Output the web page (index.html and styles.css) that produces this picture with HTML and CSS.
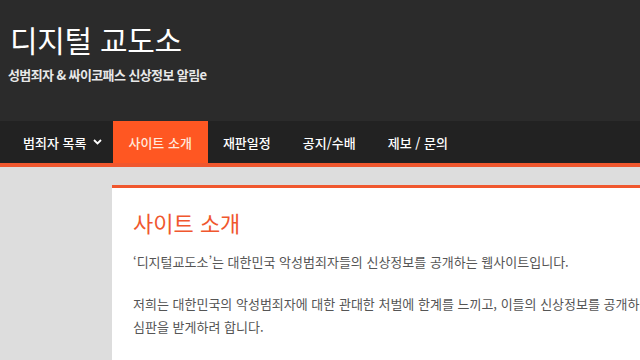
FILE: index.html
```html
<!DOCTYPE html>
<html lang="ko">
<head>
    <meta charset="UTF-8">
    <meta name="viewport" content="width=device-width, initial-scale=1.0">
    <title>디지털 교도소</title>
    <link rel="stylesheet" href="styles.css">
</head>
<body>
    <header class="site-header">
        <h1 class="site-title">디지털 교도소</h1>
        <p class="site-desc">성범죄자 &amp; 싸이코패스 신상정보 알림e</p>
    </header>

    <nav class="main-nav">
        <ul>
            <li class="has-sub"><a href="#">범죄자 목록
                <svg class="caret" width="9" height="6" viewBox="0 0 9 6"><path d="M1 1 L4.5 4.5 L8 1" fill="none" stroke="#fff" stroke-width="1.8"/></svg>
            </a></li>
            <li class="active"><a href="#">사이트 소개</a></li>
            <li><a href="#">재판일정</a></li>
            <li><a href="#">공지/수배</a></li>
            <li><a href="#">제보 / 문의</a></li>
        </ul>
    </nav>

    <main class="content">
        <article class="card">
            <h2>사이트 소개</h2>
            <p>‘디지털교도소’는 대한민국 악성범죄자들의 신상정보를 공개하는 웹사이트입니다.</p>
            <p>저희는 대한민국의 악성범죄자에 대한 관대한 처벌에 한계를 느끼고, 이들의 신상정보를 공개하여 사회적 심판을 받게하려 합니다.</p>
        </article>
    </main>
</body>
</html>
```

FILE: styles.css
```css
html, body {
    margin: 0;
    overflow: hidden;
}
body {
    font-family: "Noto Sans CJK KR", "Noto Sans", sans-serif;
    background-color: #dddddd;
    width: 1000px;
}
.site-header {
    background-color: #2b2b2b;
    height: 121px;
    padding: 0 10px;
    box-sizing: border-box;
    overflow: hidden;
}
.site-title {
    margin: 0;
    padding-top: 19px;
    font-size: 30px;
    font-weight: normal;
    line-height: 40px;
    color: #ffffff;
    letter-spacing: -0.3px;
}
.site-desc {
    margin: 6px 0 0 -2px;
    font-size: 13px;
    font-weight: bold;
    color: #e8e8e8;
    letter-spacing: -0.6px;
}
.main-nav {
    background-color: #222222;
    border-bottom: 4px solid #f0572e;
}
.main-nav ul {
    list-style: none;
    margin: 0;
    padding: 0 0 0 8px;
    display: flex;
}
.main-nav a {
    display: flex;
    align-items: center;
    gap: 7px;
    height: 42px;
    padding: 0 17px 0 15px;
    color: #ffffff;
    font-size: 13px;
    font-weight: 500;
    text-decoration: none;
}
.main-nav li.has-sub a {
    padding-right: 11px;
}
.main-nav li.active a {
    padding-right: 16px;
    background-color: #ff5722;
    color: #ffe9dc;
}
.content {
    padding: 18px 0 0 112px;
}
.card {
    background-color: #ffffff;
    border-top: 3px solid #f0572e;
    padding: 18px 21px 40px;
    width: 575px;
}
.card h2 {
    margin: 0 0 12px;
    font-size: 22px;
    font-weight: normal;
    line-height: 32px;
    color: #f0572e;
}
.card p {
    margin: 0 0 19px;
    font-size: 13px;
    line-height: 23px;
    color: #555555;
    word-break: keep-all;
}
```
